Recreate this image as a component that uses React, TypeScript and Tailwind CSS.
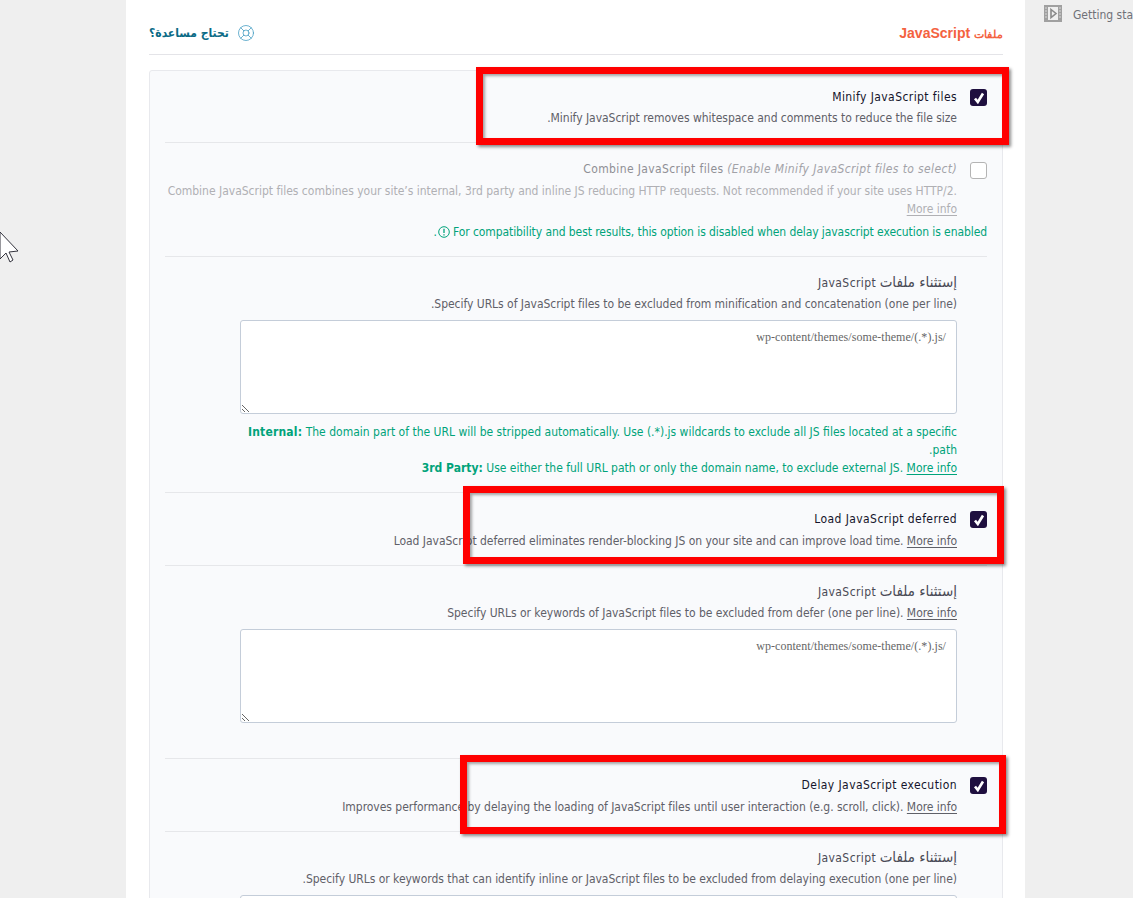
import { LifeBuoy } from "lucide-react";

const font = "[font-family:'DejaVu_Sans_Condensed','DejaVu_Sans',sans-serif]";

function CheckBox({ checked = false }: { checked?: boolean }) {
  if (!checked) {
    return <span className="mt-[2px] block h-[17px] w-[17px] shrink-0 rounded-[3px] border border-[#b4b4b4] bg-white" />;
  }
  return (
    <span className="mt-[1px] flex h-[17px] w-[17px] shrink-0 items-center justify-center rounded-[3px] bg-[#1f0f3f]">
      <svg width="12" height="12" viewBox="0 0 12 12" fill="none">
        <path d="M2 6.5 L4.8 10 L10 1.5" stroke="#fff" strokeWidth="2.6" />
      </svg>
    </span>
  );
}

function MoreInfo({ className = "" }: { className?: string }) {
  return <a className={`underline underline-offset-2 ${className}`}>More info</a>;
}

function OptionRow({ title, checked, children, tight }: {
  title: React.ReactNode; checked?: boolean; children: React.ReactNode; tight?: boolean;
}) {
  return (
    <div className="flex gap-[13px] border-b border-[#e6e7ea] pt-[17px] pb-[15px]">
      <CheckBox checked={checked} />
      <div className="min-w-0 flex-1">
        <div className="tracking-[0.42px] text-[#14142b]">{title}</div>
        <div className={`${tight ? "mt-[3px]" : "mt-[4px]"} tracking-[-0.03px] text-[#5f6068]`}>{children}</div>
      </div>
    </div>
  );
}

function ExcludeRow({ hint, children, bottom }: { hint: React.ReactNode; children?: React.ReactNode; bottom: string }) {
  return (
    <div className={`border-b border-[#e6e7ea] pt-[17px] pr-[30px] pl-[75px] ${bottom}`}>
      <div className="h-[18px] tracking-[0.42px] text-[#4a4a55]">
        <span className="text-[15px] leading-none font-light tracking-normal">إستثناء ملفات</span> JavaScript
      </div>
      <div className="mt-[3px] tracking-[-0.03px] text-[#5f6068]">{hint}</div>
      <textarea
        readOnly
        defaultValue="/wp-content/themes/some-theme/(.*).js"
        className="mt-[7px] block h-[94px] w-full rounded-[3px] border border-[#c4cdd9] bg-white px-[10px] py-[7px] font-['Liberation_Serif',serif] text-[12px] leading-[18px] tracking-[0.05px] text-[#666] outline-none"
      />
      {children}
    </div>
  );
}

function RedBox({ className }: { className: string }) {
  return (
    <div className={`pointer-events-none absolute border-[7px] border-[#ff0000] shadow-[2px_2px_3px_rgba(0,0,0,0.45),inset_2px_2px_3px_rgba(0,0,0,0.35)] ${className}`} />
  );
}

export default function App() {
  return (
    <div className={`relative flex h-[898px] w-[1133px] overflow-hidden bg-[#efefef] text-[12px] leading-[18px] ${font}`}>
      <div className="w-[126px] shrink-0" />

      {/* main column */}
      <div dir="rtl" className="w-[899px] shrink-0 bg-white pr-[22px] pl-[23px]">
        <div className="flex h-[55px] items-center justify-between border-b border-[#e4e4e8] pt-[12px]">
          <h2 className="font-['Liberation_Sans',sans-serif] text-[14px] font-bold text-[#f4623f]">
            <span className="text-[11px]">ملفات</span> JavaScript
          </h2>
          <div className="flex items-center gap-[8px]">
            <LifeBuoy size={18} strokeWidth={1} color="#3d9ac0" />
            <span className="text-[12px] font-bold text-[#0b6b86]">تحتاج مساعدة؟</span>
          </div>
        </div>

        <div className="mt-[15px] rounded-[3px] border border-[#e8e9ed] bg-[#f9fafc] px-[15px]">
          <OptionRow title="Minify JavaScript files" checked tight>
            Minify JavaScript removes whitespace and comments to reduce the file size.
          </OptionRow>

          <div className="border-b border-[#e6e7ea] pt-[17px] pb-[15px]">
            <div className="flex gap-[13px] text-[#b0b0b4]">
              <CheckBox />
              <div className="min-w-0 flex-1">
                <div className="tracking-[0.38px] text-[#8f8f95]">
                  Combine JavaScript files <em className="text-[#a2a2a8]">(Enable Minify JavaScript files to select)</em>
                </div>
                <div className="-ml-[5px] mt-[4px] tracking-[-0.01px]">
                  Combine JavaScript files combines your site’s internal, 3rd party and inline JS reducing HTTP requests. Not recommended if your site uses HTTP/2. <MoreInfo />
                </div>
              </div>
            </div>
            <div className="mt-[5px] tracking-[-0.08px] text-[#00a37a]">
              For compatibility and best results, this option is disabled when delay javascript execution is enabled
              <svg className="mr-[3px] ml-[1px] inline-block align-[-2px]" width="12" height="12" viewBox="0 0 12 12" fill="none">
                <circle cx="6" cy="6" r="5.3" stroke="#00a37a" />
                <path d="M6 2.8 V7 M6 8.2 V9.4" stroke="#00a37a" strokeWidth="1.3" />
              </svg>
              .
            </div>
          </div>

          <ExcludeRow
            bottom="pb-[15px]"
            hint="Specify URLs of JavaScript files to be excluded from minification and concatenation (one per line)."
          >
            <div className="mt-[9px] text-[#00a37a]">
              <b className="tracking-[0.2px]">Internal:</b> The domain part of the URL will be stripped automatically. Use (.*).js wildcards to exclude all JS files located at a specific path.
              <br />
              <b>3rd Party:</b> Use either the full URL path or only the domain name, to exclude external JS. <MoreInfo />
            </div>
          </ExcludeRow>

          <OptionRow title="Load JavaScript deferred" checked>
            Load JavaScript deferred eliminates render-blocking JS on your site and can improve load time. <MoreInfo />
          </OptionRow>

          <ExcludeRow
            bottom="pb-[35px]"
            hint={<>Specify URLs or keywords of JavaScript files to be excluded from defer (one per line). <MoreInfo /></>}
          />

          <OptionRow title="Delay JavaScript execution" checked>
            Improves performance by delaying the loading of JavaScript files until user interaction (e.g. scroll, click). <MoreInfo />
          </OptionRow>

          <ExcludeRow
            bottom="pb-[16px]"
            hint="Specify URLs or keywords that can identify inline or JavaScript files to be excluded from delaying execution (one per line)."
          />
        </div>
      </div>

      {/* sidebar */}
      <div className="flex flex-1 items-start gap-[11px] pt-[5px] pl-[19px] whitespace-nowrap text-[#6f7178]">
        <svg className="shrink-0" width="18" height="17" viewBox="0 0 18 17">
          <rect width="18" height="17" fill="#a0a0a0" />
          <rect x="4" y="2" width="10" height="13" fill="#efefef" />
          <path d="M7 4.5 L12 8.5 L7 12.5 Z" fill="none" stroke="#8a8a8a" strokeWidth="1.6" />
          <path d="M1 3h2M1 6h2M1 9h2M1 12h2M15 3h2M15 6h2M15 9h2M15 12h2" stroke="#d8d8d8" />
        </svg>
        <span className="mt-[1px]">Getting started</span>
      </div>

      {/* cursor in the margin */}
      <svg className="absolute top-[232px] left-0" width="20" height="32" viewBox="0 0 20 32">
        <path d="M0 0 L18 19 L9 20 L13 28 L10 30 L6 21 L0 27 Z" fill="#fff" stroke="#33333d" strokeWidth="1" />
      </svg>

      <RedBox className="top-[67px] left-[476px] h-[78px] w-[533px]" />
      <RedBox className="top-[486px] left-[463px] h-[78px] w-[541px]" />
      <RedBox className="top-[755px] left-[460px] h-[79px] w-[546px]" />
    </div>
  );
}
